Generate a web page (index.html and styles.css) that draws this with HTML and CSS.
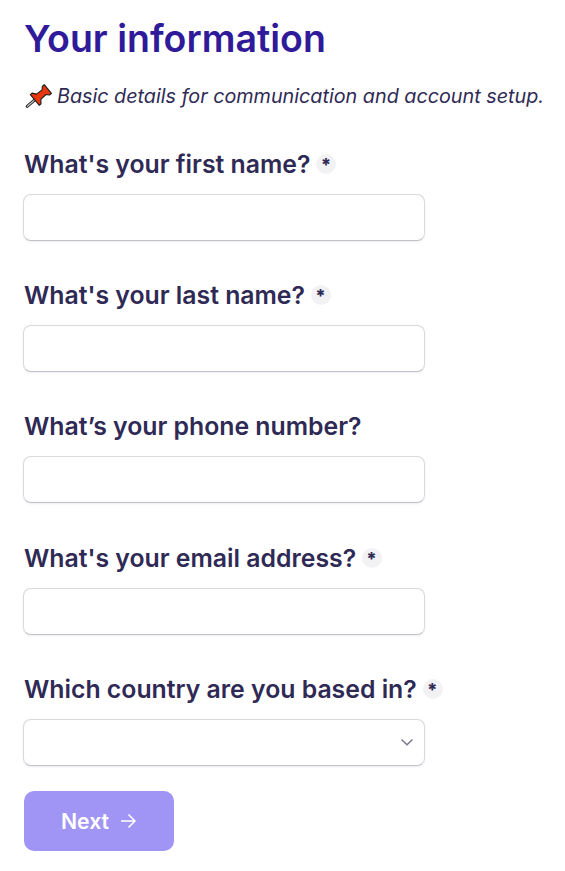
FILE: index.html
```html
<!DOCTYPE html>
<html lang="en">
<head>
<meta charset="utf-8">
<title>Your information</title>
<link rel="stylesheet" href="styles.css">
</head>
<body>
<main class="page">
  <h1 class="title">Your information</h1>
  <p class="intro">
    <svg class="pin" viewBox="0 0 27 24" aria-hidden="true">
      <g transform="translate(2.4 23) rotate(50)">
        <path d="M0 -1 V-11" stroke="#222" stroke-width="3" stroke-linecap="round"/>
        <path d="M0 -1.2 V-11" stroke="#cfcfcf" stroke-width="1.1" stroke-linecap="round"/>
        <path d="M-7 -11 L7 -11 L7 -13.2 L3.4 -16 L3 -23 L5.6 -25.4 L5.6 -28 L-5.6 -28 L-5.6 -25.4 L-3 -23 L-3.4 -16 L-7 -13.2 Z" fill="#e8360f" stroke="#1c1c1c" stroke-width="1.1" stroke-linejoin="round"/>
      </g>
    </svg>
    <span>Basic details for communication and account setup.</span>
  </p>
  <form class="form">
    <div class="field">
      <label class="label" for="first">What's your first name?<span class="req">*</span></label>
      <input class="input" id="first" type="text">
    </div>
    <div class="field">
      <label class="label" for="last">What's your last name?<span class="req">*</span></label>
      <input class="input" id="last" type="text">
    </div>
    <div class="field">
      <label class="label" for="phone">What’s your phone number?</label>
      <input class="input" id="phone" type="text">
    </div>
    <div class="field">
      <label class="label" for="email">What's your email address?<span class="req">*</span></label>
      <input class="input" id="email" type="text">
    </div>
    <div class="field field-last">
      <label class="label" for="country">Which country are you based in?<span class="req">*</span></label>
      <div class="select-box">
        <select class="input select" id="country"><option></option></select>
        <svg class="chevron" viewBox="0 0 14 8" aria-hidden="true"><path d="M1.5 1.5 L7 6.8 L12.5 1.5" fill="none" stroke="#77758c" stroke-width="1.4"/></svg>
      </div>
    </div>
    <button class="next" type="button">Next
      <svg class="arrow" viewBox="0 0 16 16" aria-hidden="true"><path d="M1 8 H14.5 M8.5 1.5 L15 8 L8.5 14.5" fill="none" stroke="#fff" stroke-width="1.5"/></svg>
    </button>
  </form>
</main>
</body>
</html>
```
FILE: styles.css
```css
* { box-sizing: border-box; }
html, body { margin: 0; background: #fff; }
body { font-family: Inter, "Liberation Sans", sans-serif; color: #2f2a55; }
.page { padding: 15px 0 20px 24px; }
.title { margin: 0; font-size: 37.5px; line-height: 48px; font-weight: 600; color: #2f1a9a; }
.intro { margin: 19px 0 0; display: flex; align-items: center; gap: 6px; height: 28px; font-size: 19.75px; font-style: italic; white-space: nowrap; color: #2f2a55; }
.pin { width: 27px; height: 24px; flex: none; overflow: visible; }
.form { margin-top: 39px; }
.field { margin-bottom: 39.2px; }
.field-last { margin-bottom: 25px; }
.label { display: flex; align-items: center; height: 30px; font-size: 24.8px; line-height: 30px; font-weight: 600; white-space: nowrap; color: #2f2a55; margin-bottom: 15px; }
.req { display: inline-flex; justify-content: center; align-items: flex-start; width: 20px; height: 20px; margin-left: 6px; border-radius: 50%; background: #f2f2f5; font-size: 18px; line-height: 20px; font-weight: 800; padding: 1px 1px 0 0; }
.input { display: block; width: 402px; height: 47px; margin-left: -1px; background: #fff; border: 1px solid #d9d9de; border-bottom-color: #c2c2c8; border-radius: 8px; box-shadow: 0 1px 2px rgba(16, 24, 40, .08); outline: none; }
.select-box { position: relative; width: 402px; }
.select { appearance: none; }
.chevron { position: absolute; right: 12px; top: 19px; width: 14px; height: 8px; }
.next { display: flex; align-items: center; justify-content: center; gap: 11px; width: 150px; height: 60px; padding: 0 7px 0 6px; border: 0; border-radius: 10px; background: #a094f5; color: #fff; font: 600 21.25px Inter, "Liberation Sans", sans-serif; }
.arrow { width: 16px; height: 16px; }
```
